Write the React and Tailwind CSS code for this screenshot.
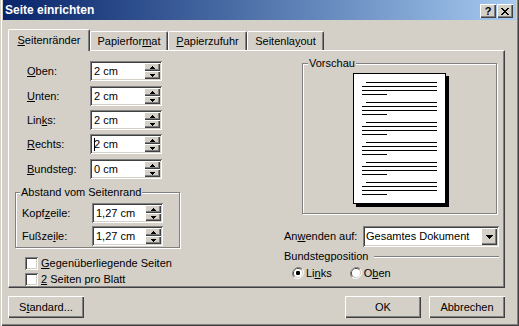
import React from "react";

// Win2000 style bevels
const raised = "shadow-[inset_1px_1px_#fff,inset_-1px_-1px_#404040,inset_-2px_-2px_#808080]";
const sunken = "shadow-[inset_1px_1px_#808080,inset_-1px_-1px_#fff,inset_2px_2px_#404040,inset_-2px_-2px_#d4d0c8]";
const etched = "border border-[#808080] shadow-[inset_1px_1px_#fff,1px_1px_#fff]";

const U = ({ children }) => <span className="underline underline-offset-[1px]">{children}</span>;

const Arrow = ({ up }) => (
  <svg width="5" height="3" viewBox="0 0 5 3">
    <path
      d={up ? "M2 0h1v1H2z M1 1h3v1H1z M0 2h5v1H0z" : "M0 0h5v1H0z M1 1h3v1H1z M2 2h1v1H2z"}
      fill="#000"
    />
  </svg>
);

const SpinBox = ({ value, wide = true, caret = false }) => (
  <div className={`flex h-[20px] bg-white p-[2px] ${wide ? "w-[72px]" : "w-[71px]"} ${sunken}`}>
    <div className="relative flex flex-1 items-center pl-[2px] leading-[13px]">
      {caret && <span className="absolute left-[2px] top-[2px] h-[13px] w-[1px] bg-black" />}
      {value}
    </div>
    <div className="flex w-[16px] flex-col">
      <div className={`flex h-[8px] items-center justify-center bg-[#d4d0c8] ${raised}`}>
        <Arrow up />
      </div>
      <div className={`flex h-[8px] items-center justify-center bg-[#d4d0c8] ${raised}`}>
        <Arrow />
      </div>
    </div>
  </div>
);

const Field = ({ label, value, caret, className = "" }) => (
  <div className={`flex h-[20px] items-center ${className}`}>
    <span className="ml-[18px] w-[63px] leading-[13px]">{label}</span>
    <SpinBox value={value} caret={caret} />
  </div>
);

const Check = ({ children, className = "" }) => (
  <div className={`flex h-[13px] items-center ${className}`}>
    <div className={`h-[13px] w-[13px] bg-white ${sunken}`} />
    <span className="ml-[3px] leading-[13px]">{children}</span>
  </div>
);

const Radio = ({ checked, children, className = "" }) => (
  <div className={`flex h-[12px] items-center ${className}`}>
    <svg width="12" height="12" viewBox="0 0 12 12">
      <path d="M1.8 10.2 A6 6 0 0 1 10.2 1.8" fill="none" stroke="#808080" strokeWidth="1" />
      <path d="M10.2 1.8 A6 6 0 0 1 1.8 10.2" fill="none" stroke="#fff" strokeWidth="1" />
      <path d="M2.5 9.5 A5 5 0 0 1 9.5 2.5" fill="none" stroke="#404040" strokeWidth="1" />
      <path d="M9.5 2.5 A5 5 0 0 1 2.5 9.5" fill="none" stroke="#d4d0c8" strokeWidth="1" />
      <circle cx="6" cy="6" r="4" fill="#fff" />
      {checked && <rect x="4" y="4" width="4" height="4" rx="1.2" fill="#000" />}
    </svg>
    <span className="ml-[2px] leading-[13px]">{children}</span>
  </div>
);

const Button = ({ children, className = "" }) => (
  <div className={`flex h-[22px] w-[76px] items-center justify-center bg-[#d4d0c8] leading-[13px] ${raised} ${className}`}>
    {children}
  </div>
);

const tabBorder = "border-l border-t border-l-white border-t-white border-r border-r-[#404040] shadow-[inset_-1px_0_#808080] rounded-t-[2px]";

const PageLines = () => (
  <div className="flex flex-col gap-[7px]">
    {[0, 1, 2, 3, 4, 5].map((i) => (
      <div key={i} className="flex flex-col gap-[3px]">
        <div className="ml-[4px] h-[1px] w-[71px] bg-black" />
        <div className="h-[1px] w-[75px] bg-black" />
        <div className="h-[1px] w-[75px] bg-black" />
        <div className="h-[1px] w-[25px] bg-black" />
      </div>
    ))}
  </div>
);

export default function App() {
  return (
    <div className="relative h-[326px] w-[519px] overflow-hidden bg-[#d4d0c8] font-['Liberation_Sans',Arial,sans-serif] text-[11px] text-black shadow-[inset_1px_0_#d4d0c8,inset_2px_0_#fff,inset_-1px_-1px_#404040,inset_-2px_-2px_#808080]">
      {/* Title bar */}
      <div className="mx-[3px] flex h-[20px] items-start bg-linear-to-r from-[#0a246a] to-[#a6caf0] pl-[2px] pr-[3px]">
        <span className="mt-[3px] text-[12px] font-bold leading-[14px] text-white">Seite einrichten</span>
        <div className="ml-auto mt-[4px] flex gap-[1px]">
          <div className={`flex h-[14px] w-[16px] items-center justify-center bg-[#d4d0c8] text-[11px] font-bold leading-none ${raised}`}>
            ?
          </div>
          <div className={`flex h-[14px] w-[16px] items-center justify-center bg-[#d4d0c8] ${raised}`}>
            <svg width="8" height="7" viewBox="0 0 8 7">
              <path
                d="M0 0h2v1H0z M6 0h2v1H6z M1 1h2v1H1z M5 1h2v1H5z M2 2h4v1H2z M3 3h2v1H3z M2 4h4v1H2z M1 5h2v1H1z M5 5h2v1H5z M0 6h2v1H0z M6 6h2v1H6z"
                fill="#000"
              />
            </svg>
          </div>
        </div>
      </div>

      {/* Tabs */}
      <div className="ml-[8px] mt-[9px] flex h-[22px] items-end">
        <div className={`relative z-10 flex h-[22px] w-[82px] items-center justify-center bg-[#d4d0c8] pb-[1px] ${tabBorder}`}>
          <span className="leading-[13px]"><U>S</U>eitenränder</span>
        </div>
        <div className={`mb-[1px] flex h-[19px] w-[78px] items-center justify-center pt-[1px] ${tabBorder}`}>
          <span className="leading-[13px]">Papierfor<U>m</U>at</span>
        </div>
        <div className={`mb-[1px] flex h-[19px] w-[79px] items-center justify-center pt-[1px] ${tabBorder}`}>
          <span className="leading-[13px]"><U>P</U>apierzufuhr</span>
        </div>
        <div className={`mb-[1px] flex h-[19px] w-[77px] items-center justify-center pt-[1px] ${tabBorder}`}>
          <span className="leading-[13px]">Seitenla<U>y</U>out</span>
        </div>
      </div>

      {/* Tab panel */}
      <div className="-mt-[1px] ml-[8px] flex h-[238px] w-[497px] border-b border-l border-r border-t border-b-[#404040] border-l-white border-r-[#404040] border-t-white shadow-[inset_-1px_-1px_#808080]">
        {/* Left column */}
        <div className="flex w-[175px] flex-col pt-[10px]">
          <Field label={<><U>O</U>ben:</>} value="2 cm" />
          <Field className="mt-[5px]" label={<><U>U</U>nten:</>} value="2 cm" />
          <Field className="mt-[4px]" label={<>Lin<U>k</U>s:</>} value="2 cm" />
          <Field className="mt-[4px]" label={<><U>R</U>echts:</>} value="2 cm" caret />
          <Field className="mt-[5px]" label={<><U>B</U>undsteg:</>} value="0 cm" />

          <div className={`relative ml-[6px] mt-[13px] h-[56px] w-[165px] pl-[6px] pt-[10px] ${etched}`}>
            <span className="absolute -top-[7px] left-[4px] bg-[#d4d0c8] px-[1px] leading-[13px]">
              Abstand vom Seitenrand
            </span>
            <div className="flex h-[20px] items-center">
              <span className="w-[70px] leading-[13px]">Kopf<U>z</U>eile:</span>
              <SpinBox value="1,27 cm" wide={false} />
            </div>
            <div className="mt-[3px] flex h-[20px] items-center">
              <span className="w-[70px] leading-[13px]">Fußze<U>i</U>le:</span>
              <SpinBox value="1,27 cm" wide={false} />
            </div>
          </div>

          <Check className="ml-[16px] mt-[9px]"><U>G</U>egenüberliegende Seiten</Check>
          <Check className="ml-[16px] mt-[3px]"><U>2</U> Seiten pro Blatt</Check>
        </div>

        {/* Right column */}
        <div className="ml-[100px] flex w-[215px] flex-col pt-[12px]">
          <div className={`relative ml-[18px] flex h-[151px] w-[195px] justify-center pt-[9px] ${etched}`}>
            <span className="absolute -top-[7px] left-[5px] bg-[#d4d0c8] px-[1px] leading-[13px]">Vorschau</span>
            <div className="h-[131px] w-[93px] border border-black bg-white pl-[8px] pt-[8px] shadow-[3px_3px_0_#000]">
              <PageLines />
            </div>
          </div>

          <div className="mt-[12px] flex h-[21px] items-center">
            <span className="w-[79px] leading-[13px]">An<U>w</U>enden auf:</span>
            <div className={`flex h-[21px] w-[136px] bg-white p-[2px] ${sunken}`}>
              <div className="flex flex-1 items-center pl-[1px] leading-[13px]">Gesamtes Dokument</div>
              <div className={`flex h-[17px] w-[16px] items-center justify-center bg-[#d4d0c8] ${raised}`}>
                <svg width="7" height="4" viewBox="0 0 7 4">
                  <path d="M0 0h7v1H0z M1 1h5v1H1z M2 2h3v1H2z M3 3h1v1H3z" fill="#000" />
                </svg>
              </div>
            </div>
          </div>

          <div className="mt-[3px] flex h-[13px] items-center">
            <span className="leading-[13px]">Bundstegposition</span>
            <div className="ml-[6px] h-[2px] flex-1 border-b border-t border-b-white border-t-[#808080]" />
          </div>

          <div className="ml-[8px] mt-[4px] flex">
            <Radio checked>Li<U>n</U>ks</Radio>
            <Radio className="ml-[18px]">O<U>b</U>en</Radio>
          </div>
        </div>
      </div>

      {/* Bottom buttons */}
      <div className="ml-[8px] mt-[8px] flex">
        <Button>S<U>t</U>andard...</Button>
        <Button className="ml-[261px]">OK</Button>
        <Button className="ml-[8px]">Abbrechen</Button>
      </div>
    </div>
  );
}
